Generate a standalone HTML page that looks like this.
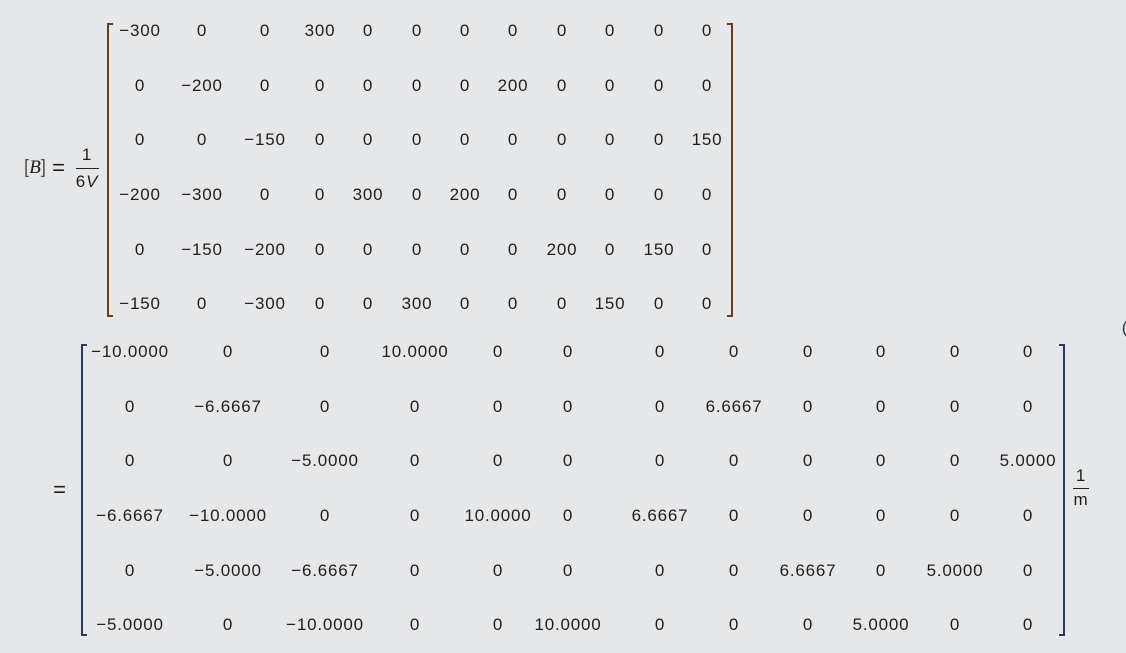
<!DOCTYPE html>
<html><head><meta charset="utf-8"><style>
body{margin:0;width:1126px;height:653px;background:#e6e7e9;position:relative;overflow:hidden;font-family:"Liberation Sans","DejaVu Sans",sans-serif;font-size:17px;letter-spacing:0.8px;color:#1e1e1e}
.r{position:absolute;left:0;width:1126px;height:0}
.r span{position:absolute;top:0;transform:translate(-50%,-50%);white-space:nowrap}
.a span:nth-child(1){left:140px}.a span:nth-child(2){left:202px}.a span:nth-child(3){left:265px}.a span:nth-child(4){left:320px}.a span:nth-child(5){left:368px}.a span:nth-child(6){left:417px}.a span:nth-child(7){left:465px}.a span:nth-child(8){left:513px}.a span:nth-child(9){left:562px}.a span:nth-child(10){left:610px}.a span:nth-child(11){left:659px}.a span:nth-child(12){left:707px}
.b span:nth-child(1){left:130px}.b span:nth-child(2){left:228px}.b span:nth-child(3){left:325px}.b span:nth-child(4){left:415px}.b span:nth-child(5){left:498px}.b span:nth-child(6){left:568px}.b span:nth-child(7){left:660px}.b span:nth-child(8){left:734px}.b span:nth-child(9){left:808px}.b span:nth-child(10){left:881px}.b span:nth-child(11){left:955px}.b span:nth-child(12){left:1028px}
.br{position:absolute;width:4px;border:2px solid;border-width:2px 0 2px 2px}
.br.rt{border-width:2px 2px 2px 0}
.t{position:absolute;transform:translate(-50%,-50%);white-space:nowrap}
</style></head><body>
<div class="br" style="left:107px;top:23px;height:290px;border-color:#6b3b1f"></div>
<div class="br rt" style="left:727px;top:23px;height:290px;border-color:#6b3b1f"></div>
<div class="br" style="left:81px;top:344px;height:288px;border-color:#2b3866"></div>
<div class="br rt" style="left:1059px;top:344px;height:288px;border-color:#2b3866"></div>

<div class="t" style="left:35px;top:168px;font-size:19px;letter-spacing:0"><span style="color:#555">[</span><i style="font-family:'Liberation Serif',serif">B</i><span style="color:#555">]</span></div>
<div class="t" style="left:59px;top:168px;font-size:22px">=</div>
<div class="t" style="left:87px;top:155px;">1</div>
<div style="position:absolute;left:76px;top:168px;width:23px;height:1px;background:#222"></div>
<div class="t" style="left:87px;top:182px;">6<i>V</i></div>
<div class="t" style="left:60px;top:490px;font-size:22px">=</div>
<div class="t" style="left:1081px;top:476px;">1</div>
<div style="position:absolute;left:1073px;top:488px;width:16px;height:1px;background:#222"></div>
<div class="t" style="left:1081px;top:500px;">m</div>
<div class="t" style="left:1125px;top:328px;color:#2b3866">(</div>

<div class="r a" style="top:31px"><span>−300</span><span>0</span><span>0</span><span>300</span><span>0</span><span>0</span><span>0</span><span>0</span><span>0</span><span>0</span><span>0</span><span>0</span></div>
<div class="r a" style="top:86px"><span>0</span><span>−200</span><span>0</span><span>0</span><span>0</span><span>0</span><span>0</span><span>200</span><span>0</span><span>0</span><span>0</span><span>0</span></div>
<div class="r a" style="top:140px"><span>0</span><span>0</span><span>−150</span><span>0</span><span>0</span><span>0</span><span>0</span><span>0</span><span>0</span><span>0</span><span>0</span><span>150</span></div>
<div class="r a" style="top:195px"><span>−200</span><span>−300</span><span>0</span><span>0</span><span>300</span><span>0</span><span>200</span><span>0</span><span>0</span><span>0</span><span>0</span><span>0</span></div>
<div class="r a" style="top:250px"><span>0</span><span>−150</span><span>−200</span><span>0</span><span>0</span><span>0</span><span>0</span><span>0</span><span>200</span><span>0</span><span>150</span><span>0</span></div>
<div class="r a" style="top:304px"><span>−150</span><span>0</span><span>−300</span><span>0</span><span>0</span><span>300</span><span>0</span><span>0</span><span>0</span><span>150</span><span>0</span><span>0</span></div>

<div class="r b" style="top:352px"><span>−10.0000</span><span>0</span><span>0</span><span>10.0000</span><span>0</span><span>0</span><span>0</span><span>0</span><span>0</span><span>0</span><span>0</span><span>0</span></div>
<div class="r b" style="top:407px"><span>0</span><span>−6.6667</span><span>0</span><span>0</span><span>0</span><span>0</span><span>0</span><span>6.6667</span><span>0</span><span>0</span><span>0</span><span>0</span></div>
<div class="r b" style="top:461px"><span>0</span><span>0</span><span>−5.0000</span><span>0</span><span>0</span><span>0</span><span>0</span><span>0</span><span>0</span><span>0</span><span>0</span><span>5.0000</span></div>
<div class="r b" style="top:516px"><span>−6.6667</span><span>−10.0000</span><span>0</span><span>0</span><span>10.0000</span><span>0</span><span>6.6667</span><span>0</span><span>0</span><span>0</span><span>0</span><span>0</span></div>
<div class="r b" style="top:571px"><span>0</span><span>−5.0000</span><span>−6.6667</span><span>0</span><span>0</span><span>0</span><span>0</span><span>0</span><span>6.6667</span><span>0</span><span>5.0000</span><span>0</span></div>
<div class="r b" style="top:625px"><span>−5.0000</span><span>0</span><span>−10.0000</span><span>0</span><span>0</span><span>10.0000</span><span>0</span><span>0</span><span>0</span><span>5.0000</span><span>0</span><span>0</span></div>
</body></html>
